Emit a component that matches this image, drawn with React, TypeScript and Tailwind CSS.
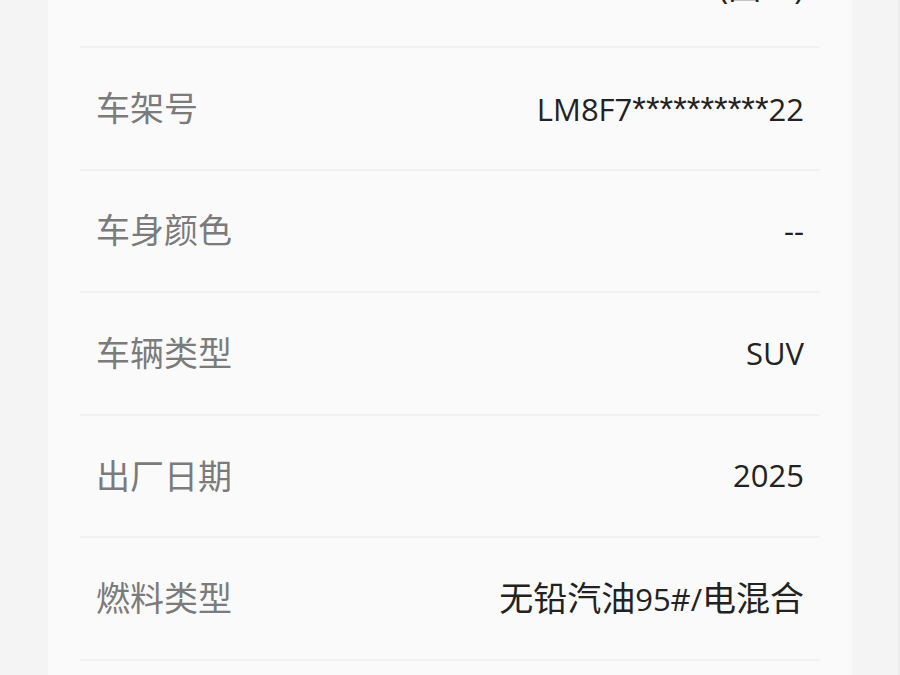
import type { ReactNode } from 'react';

const stars = '**********';

const rows: { label: string; value: ReactNode }[] = [
  {
    label: '车架号',
    value: (
      <>
        LM8F7
        <span className="text-[35px]" style={{ fontFamily: '"Liberation Sans", sans-serif' }}>
          {stars}
        </span>
        22
      </>
    ),
  },
  { label: '车身颜色', value: '--' },
  { label: '车辆类型', value: 'SUV' },
  { label: '出厂日期', value: '2025' },
  {
    label: '燃料类型',
    value: (
      <>
        <span className="text-[34px]">无铅汽油</span>95#/<span className="text-[34px]">电混合</span>
      </>
    ),
  },
  { label: '变速箱', value: <span className="text-[34px]">自动</span> },
];

export default function App() {
  return (
    <div
      className="w-[900px] h-[675px] overflow-hidden bg-[#f4f4f4] border-r-2 border-[#ececec]"
      style={{ fontFamily: '"Open Sans", "Noto Sans CJK SC", sans-serif' }}
    >
      <div className="ml-[48px] w-[804px] bg-[#fafafa] px-8 mt-[-122px]">
        {/* top row, mostly scrolled away */}
        <div className="h-[170px] flex items-center justify-between px-4 border-b-2 border-[#f1f1f1]">
          <span className="text-[34px] text-[#7b7b7b]">排放标准</span>
          <div className="text-right text-[33px] leading-[50px] text-[#222222]">
            <div>国六</div>
            <div>(国Ⅵ)</div>
          </div>
        </div>
        {rows.map((r) => (
          <div
            key={r.label}
            className="h-[122.6px] flex items-center justify-between px-4 border-b-2 border-[#f1f1f1]"
          >
            <span className="text-[34px] text-[#7b7b7b]">{r.label}</span>
            <span className="text-[31px] text-[#222222] leading-[1.4]">{r.value}</span>
          </div>
        ))}
      </div>
    </div>
  );
}
